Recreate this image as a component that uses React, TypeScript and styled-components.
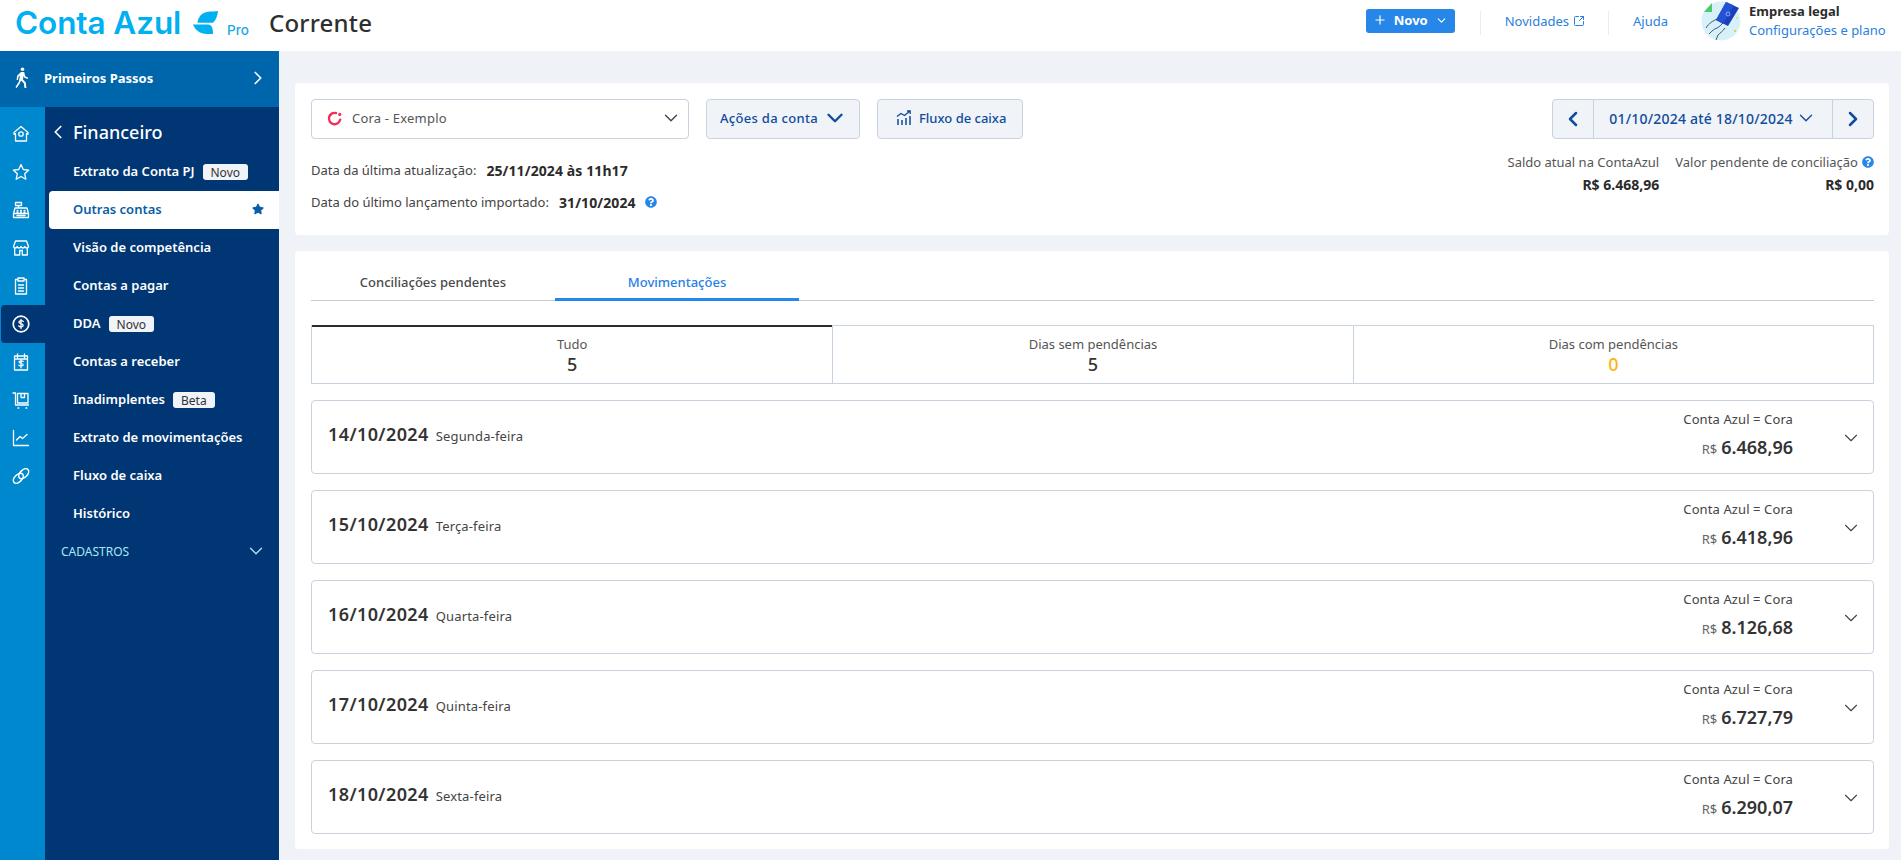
import React from "react";
import styled, { createGlobalStyle } from "styled-components";
import { ChevronDown, ChevronLeft, ChevronRight, Plus, SquareArrowOutUpRight } from "lucide-react";
import { FaQuestionCircle, FaStar } from "react-icons/fa";

const Global = createGlobalStyle`
  html, body { margin: 0; padding: 0; height: 100%; overflow: hidden; background: #eff2f7; }
  body { font-family: "Noto Sans", "Open Sans", sans-serif; color: #333; font-size: 13px; }
  * { box-sizing: border-box; }
`;

const Page = styled.div`
  width: 1901px; height: 860px; display: flex; flex-direction: column; overflow: hidden;
`;
const TopBar = styled.header`
  height: 51px; flex: none; background: #fff; display: flex; align-items: center; padding-left: 15px;
`;
const Logo = styled.div`
  display: flex; align-items: center; width: 254px; flex: none; margin-top: -6px;
`;
const LogoWord = styled.span`
  font-family: "Inter", sans-serif; font-weight: 600; font-size: 31.500px; letter-spacing: -0.1px; color: #00b0f0; line-height: 40px; white-space: nowrap; width: 178px;
`;
const LogoPro = styled.span`
  font-family: "Inter", sans-serif; font-size: 13.500px; font-weight: 500; color: #1ba8e6; margin: 14px 0 0 9px;
`;
const PageTitle = styled.h1`
  margin: -5px 0 0; font-size: 24px; letter-spacing: 0.2px; font-weight: 500; color: #2f2f2f; line-height: 32px;
`;
const TopRight = styled.div`
  margin-left: auto; display: flex; align-items: center; height: 100%;
`;
const NewButton = styled.button`
  width: 89px; height: 24px; border: 0; border-radius: 3px; background: #2687e9; color: #fff; display: flex; align-items: center; justify-content: center; gap: 7px; font: 700 13px "Noto Sans", sans-serif; padding: 0 0 2px; margin-top: -9px;
`;
const TopSep = styled.span<{ $left: number }>`
  width: 1px; height: 24px; background: #e9edf3; margin-left: ${p => p.$left}px; margin-top: -5px;
`;
const TopLink = styled.a<{ $left: number }>`
  color: #2a80de; font-size: 13px; margin-left: ${p => p.$left}px; display: flex; align-items: center; gap: 4px; margin-top: -9px; white-space: nowrap;
`;
const Company = styled.div`
  display: flex; align-items: center; margin-left: 33px; width: 200px; margin-top: -9px;
`;
const CompanyText = styled.div`
  margin-left: 8px; display: flex; flex-direction: column; line-height: 19px;
`;
const CompanyName = styled.strong`
  font-size: 13px; font-weight: 700; color: #2b2b2b;
`;
const CompanyLink = styled.a`
  font-size: 13px; color: #2a80de; white-space: nowrap;
`;
const Body = styled.div`
  flex: 1; display: flex; min-height: 0;
`;
const Sidebar = styled.aside`
  width: 279px; flex: none; display: flex; flex-direction: column;
`;
const FirstSteps = styled.div`
  height: 56px; flex: none; background: #0066ab; color: #fff; display: flex; align-items: center; padding: 0 10px 2px 15px; font-size: 13px; font-weight: 700;
`;
const FirstStepsLabel = styled.span`
  margin-left: 15px; flex: 1;
`;
const SideBody = styled.div`
  flex: 1; display: flex; min-height: 0;
`;
const Rail = styled.nav`
  width: 45px; flex: none; background: #0088cf; padding-top: 8px; display: flex; flex-direction: column; align-items: flex-end;
`;
const RailItem = styled.div<{ $active?: boolean }>`
  width: 44px; height: 38px; flex: none; display: flex; align-items: center; justify-content: center; padding-right: 4px; color: #fff;
  border-radius: 4px 0 0 4px; background: ${p => (p.$active ? "#003673" : "transparent")};
`;
const Nav = styled.nav`
  flex: 1; background: #003673; color: #fff;
`;
const NavTitle = styled.div`
  height: 46px; display: flex; align-items: center; padding: 4px 0 0 2px; font-size: 18px; font-weight: 500;
`;
const NavTitleText = styled.span`
  margin-left: 4px;
`;
const NavItem = styled.div<{ $active?: boolean }>`
  height: 38px; margin-left: 4px; padding: 0 15px 2px 24px; display: flex; align-items: center; font-size: 13px; font-weight: 600;
  color: ${p => (p.$active ? "#0a5ea6" : "#fff")};
  background: ${p => (p.$active ? "#fff" : "transparent")};
  border-radius: 4px 0 0 4px;
  justify-content: ${p => (p.$active ? "space-between" : "flex-start")};
`;
const Tag = styled.span`
  height: 16px; padding: 0 8px; margin-left: 8px; border-radius: 3px; background: #f0f3f8; color: #333; font-size: 12px; font-weight: 400; display: flex; align-items: center; margin-top: 2px;
`;
const NavGroup = styled.div`
  height: 38px; padding: 0 12px 2px 16px; display: flex; align-items: center; justify-content: space-between; font-size: 12px; color: #a8e6f6;
`;
const Main = styled.main`
  flex: 1; min-width: 0; padding: 32px 12px 0 16px; display: flex; flex-direction: column; gap: 16px;
`;
const Card = styled.section`
  background: #fff; border-radius: 4px; padding: 16px 15px 16px 16px;
`;
const AccountCard = styled(Card)`
  height: 152px; display: flex; justify-content: space-between;
`;
const Column = styled.div`
  display: flex; flex-direction: column;
`;
const Toolbar = styled.div`
  display: flex; gap: 17px; height: 40px; margin-bottom: 15px;
`;
const AccountSelect = styled.div`
  width: 378px; height: 40px; border: 1px solid #c9d3e0; border-radius: 4px; display: flex; align-items: center; padding: 0 6px 2px 15px; color: #555; font-size: 13px; letter-spacing: 0.2px;
`;
const AccountName = styled.span`
  margin-left: 10px; flex: 1;
`;
const GhostButton = styled.button<{ $w: number; $track?: number }>`
  width: ${p => p.$w}px; height: 40px; border: 1px solid #c9d3e0; border-radius: 4px; background: #f0f3f8; color: #0f4c9c; display: flex; align-items: center; justify-content: center; gap: 4px; padding: 0 0 2px 2px; font: 500 13px "Noto Sans", sans-serif; letter-spacing: ${p => p.$track ?? 0}px;
`;
const InfoLine = styled.div`
  height: 32px; display: flex; align-items: center; color: #444; font-size: 13px; white-space: nowrap;
`;
const InfoValue = styled.strong`
  font-weight: 700; font-size: 14px; letter-spacing: 0.1px; color: #2b2b2b; margin-left: 10px;
`;
const HelpIcon = styled(FaQuestionCircle)<{ $gap?: number }>`
  color: #2687e9; width: 12px; height: 12px; margin-left: ${p => p.$gap ?? 9}px;
`;
const RightCol = styled(Column)`
  align-items: flex-end;
`;
const DateGroup = styled.div`
  width: 322px; height: 40px; border: 1px solid #c9d3e0; border-radius: 4px; background: #f0f3f8; display: flex; color: #0f4c9c;
`;
const DateArrow = styled.div`
  width: 40px; flex: none; display: flex; align-items: center; justify-content: center;
`;
const DateRange = styled.div`
  flex: 1; border-left: 1px solid #c9d3e0; border-right: 1px solid #c9d3e0; display: flex; align-items: center; justify-content: center; gap: 2px; padding-bottom: 2px; font-size: 14px; letter-spacing: 0.2px; font-weight: 500;
`;
const Balances = styled.div`
  display: flex; gap: 16px; margin-top: 14px;
`;
const Balance = styled.div`
  display: flex; flex-direction: column; align-items: flex-end;
`;
const BalanceLabel = styled.div`
  display: flex; align-items: center; line-height: 18px; color: #555; font-size: 13px; white-space: nowrap;
`;
const BalanceValue = styled.div`
  font-weight: 700; line-height: 18px; margin-top: 5px; color: #2b2b2b; font-size: 14px;
`;
const ListCard = styled(Card)`
  height: 598px;
`;
const Tabs = styled.div`
  height: 34px; display: flex; border-bottom: 1px solid #c8ccd2;
`;
const TabItem = styled.div<{ $active?: boolean }>`
  width: 244px; height: 34px; text-align: center; line-height: 30px; font-size: 13px; font-weight: 500;
  color: ${p => (p.$active ? "#2680e6" : "#4a4a4a")};
  border-bottom: ${p => (p.$active ? "3px solid #2687e9" : "0")};
`;
const Summary = styled.div`
  margin-top: 24px; height: 59px; display: grid; grid-template-columns: 1fr 1fr 1fr; border: 1px solid #c9d3e0; border-top: 0;
`;
const SummaryCell = styled.div<{ $active?: boolean }>`
  border-top: ${p => (p.$active ? "2px solid #2b2b2b" : "1px solid #c9d3e0")};
  border-left: ${p => (p.$active ? "0" : "1px solid #c9d3e0")};
  display: flex; flex-direction: column; align-items: center; padding-top: ${p => (p.$active ? 8 : 9)}px;
`;
const SummaryLabel = styled.span`
  font-size: 13px; line-height: 18px; color: #555;
`;
const SummaryValue = styled.span<{ $warn?: boolean }>`
  font-size: 18px; line-height: 22px; font-weight: 500; color: ${p => (p.$warn ? "#ffb30f" : "#333")};
`;
const Rows = styled.div`
  margin-top: 16px; display: flex; flex-direction: column; gap: 16px;
`;
const Row = styled.div`
  height: 74px; border: 1px solid #c9d3e0; border-radius: 4px; display: flex; align-items: center; padding: 0 16px 3px;
`;
const RowDate = styled.div`
  display: flex; align-items: baseline; flex: 1; padding-bottom: 3px;
`;
const DateText = styled.span`
  font-size: 18px; letter-spacing: 0.4px; font-weight: 600; color: #333;
`;
const DayText = styled.span`
  font-size: 13px; letter-spacing: 0.15px; color: #444; margin-left: 7px;
`;
const RowTotal = styled.div`
  display: flex; flex-direction: column; align-items: flex-end; margin-right: 47px; padding-bottom: 2px;
`;
const TotalLabel = styled.span`
  font-size: 13px; letter-spacing: 0.1px; color: #444; line-height: 18px;
`;
const TotalAmount = styled.span`
  display: flex; align-items: baseline; gap: 4px; margin-top: 8px; line-height: 22px;
`;
const Currency = styled.span`
  font-size: 13px; color: #666;
`;
const AmountValue = styled.span`
  font-size: 18px; font-weight: 600; color: #333;
`;
const RowChevron = styled(ChevronDown)`
  color: #444; flex: none; margin: 5px -5px 0 0;
`;

const Ic = ({ children }: { children: React.ReactNode }) => (
  <svg width="20" height="20" viewBox="0 0 20 20" fill="none" stroke="currentColor" strokeWidth="1.300" strokeLinejoin="round" strokeLinecap="round">{children}</svg>
);

const railIcons: React.ReactNode[] = [
  <Ic key="h"><path d="M10 2.500 3 8.500v1.700l1.500-.6V17h11V9.600l1.500.6V8.500z" /><circle cx="10" cy="10" r="2.200" /></Ic>,
  <Ic key="s"><path d="m10 2.500 2.300 5 5.400.6-4 3.700 1.100 5.400L10 14.500l-4.800 2.700 1.100-5.400-4-3.700 5.400-.6z" /></Ic>,
  <Ic key="c"><path d="M4.500 2.500h6v3h-6zM7.500 5.500V8M4 8h12l1.500 5.500h-15zM2.500 13.500V17.500h15v-4M6 10.300h1M9.500 10.300h1M13 10.300h1M6 12h1M9.500 12h1M13 12h1M6 15.500h8" /></Ic>,
  <Ic key="st"><path d="M4.500 3h11l2 5.500c-.5 2-3 2-3.700 0-.6 2-3 2-3.800 0-.8 2-3.200 2-3.800 0-.7 2-3.200 2-3.700 0zM3.700 10.500V17h5v-4.500h2.600V17h5v-6.500" /></Ic>,
  <Ic key="cl"><path d="M7 3.500H4.500V18h11V3.500H13M7 2h6v3H7zM7.500 9h5M7.500 12h5M7.500 15h5" /></Ic>,
  <Ic key="d"><circle cx="10" cy="10" r="7.800" strokeWidth="1.700" /><path d="M12.300 7.500c-.6-1-3.800-1.400-4.400.4-.5 2 4.500 1.300 4.300 3.600-.2 1.800-3.700 1.600-4.500.4M10 5.500v9" strokeWidth="1.300" /></Ic>,
  <Ic key="cal"><path d="M3.500 4h13v14h-13zM6.500 2v3.500M13.500 2v3.500M3.500 7h13" /><path d="M12.300 9.500c-.5-.8-4-1-4.300.4-.3 1.600 4.300 1 4.200 2.900-.2 1.400-3.600 1.300-4.400.3M10 8v8" strokeWidth="1.200" /></Ic>,
  <Ic key="ct"><path d="M2 3h2.500v12h13M6.500 3.500h10.500V13H6.500zM10 3.500v4h3.500v-4M7 18h.8M15 18h.8" /></Ic>,
  <Ic key="ch"><path d="M2.500 2.500V17.500h15M5.500 12l3.500-3.500 2.500 2L16 6.500" /></Ic>,
  <Ic key="l"><ellipse cx="7.300" cy="12.300" rx="6" ry="3.600" transform="rotate(-45 7.300 12.300)" strokeWidth="1.600" /><ellipse cx="12.700" cy="7.700" rx="6" ry="3.600" transform="rotate(-45 12.700 7.700)" strokeWidth="1.600" /></Ic>,
];

const navItems: { label: string; tag?: string; active?: boolean }[] = [
  { label: "Extrato da Conta PJ", tag: "Novo" },
  { label: "Outras contas", active: true },
  { label: "Visão de competência" },
  { label: "Contas a pagar" },
  { label: "DDA", tag: "Novo" },
  { label: "Contas a receber" },
  { label: "Inadimplentes", tag: "Beta" },
  { label: "Extrato de movimentações" },
  { label: "Fluxo de caixa" },
  { label: "Histórico" },
];

const rows = [
  ["14/10/2024", "Segunda-feira", "6.468,96"],
  ["15/10/2024", "Terça-feira", "6.418,96"],
  ["16/10/2024", "Quarta-feira", "8.126,68"],
  ["17/10/2024", "Quinta-feira", "6.727,79"],
  ["18/10/2024", "Sexta-feira", "6.290,07"],
];

const LogoMark = () => (
  <svg width="25" height="23" viewBox="0 0 25 23">
    <path d="M4.500 11.800C5 6 9 1.500 15 .8 18 .5 22 .5 25 0 24.500 5 23 9 20 11.800Z" fill="#00b0f0" />
    <path d="M0 13.500H15.500C18.500 13.500 20 17 20 23H14C7 23 2 19 0 13.500Z" fill="#00b0f0" />
  </svg>
);

const Walker = () => (
  <svg width="14" height="22" viewBox="0 0 14 22" fill="#fff">
    <circle cx="7.500" cy="2.200" r="1.800" />
    <path d="M6 5h3.200l1 4.300 3 1.500-.6 1.300-3.500-1.700-.6-1.600-.5 3.700 2.800 3 .6 5.500H9.500l-.7-4.800-2.800-2.700-1.300 3.100L1.700 21 .5 20l3.300-5.200L5 8.500 3.500 9.700 3 13H1.600l.5-4.300z" />
  </svg>
);

const Avatar = () => (
  <svg width="40" height="40" viewBox="0 0 40 40">
    <circle cx="20" cy="20" r="19.500" fill="#d7f1f9" />
    <path d="M3 11 11 2v9z" fill="#4cc96b" />
    <path d="M25 1 38 7 27 25 15 19z" fill="#1d3fb8" />
    <path d="M25 1 33 4.500 22 23 15 19z" fill="#2452d6" />
    <circle cx="27" cy="13" r="2" fill="none" stroke="#9fc0ff" strokeWidth="0.800" />
    <path d="M5 27c3-5 7-7 11-9M8 33c3-3 5-5 8-6 2-.8 5-4 6-5M15 39l2-5c2-2 5-4 7-7" fill="none" stroke="#1c2d4f" strokeWidth="0.800" />
    <circle cx="36" cy="17" r="0.800" fill="#f5b82e" />
    <circle cx="34" cy="30" r="1" fill="#f5b82e" />
  </svg>
);

const CoraMark = () => (
  <svg width="15" height="15" viewBox="0 0 14 14" fill="none">
    <path d="M8.500 1.900A5.300 5.300 0 1 0 12.300 8" stroke="#ef2f58" strokeWidth="2.200" strokeLinecap="round" />
    <circle cx="11.900" cy="3.200" r="1.500" fill="#ef2f58" />
  </svg>
);

const FlowIcon = () => (
  <svg width="16" height="16" viewBox="0 0 16 16" fill="none" stroke="currentColor" strokeWidth="1.500">
    <path d="M2 9v6M6 10v5M10 8v7M14 6v9" />
    <path d="M1 6.500 5 3.500 8.500 5.500 14 1M11 1h3.200v3" strokeWidth="1.300" />
  </svg>
);

export default function App() {
  return (
    <Page>
      <Global />
      <TopBar>
        <Logo>
          <LogoWord>Conta Azul</LogoWord>
          <LogoMark />
          <LogoPro>Pro</LogoPro>
        </Logo>
        <PageTitle>Corrente</PageTitle>
        <TopRight>
          <NewButton><Plus size={14} strokeWidth={2} />Novo<ChevronDown size={13} /></NewButton>
          <TopSep $left={25} />
          <TopLink $left={24}>Novidades<SquareArrowOutUpRight size={12} /></TopLink>
          <TopSep $left={23} />
          <TopLink $left={24}>Ajuda</TopLink>
          <Company>
            <Avatar />
            <CompanyText>
              <CompanyName>Empresa legal</CompanyName>
              <CompanyLink>Configurações e plano</CompanyLink>
            </CompanyText>
          </Company>
        </TopRight>
      </TopBar>
      <Body>
        <Sidebar>
          <FirstSteps>
            <Walker />
            <FirstStepsLabel>Primeiros Passos</FirstStepsLabel>
            <ChevronRight size={22} strokeWidth={1.800} />
          </FirstSteps>
          <SideBody>
            <Rail>
              {railIcons.map((ic, i) => (
                <RailItem key={i} $active={i === 5}>{ic}</RailItem>
              ))}
            </Rail>
            <Nav>
              <NavTitle>
                <ChevronLeft size={22} strokeWidth={1.800} />
                <NavTitleText>Financeiro</NavTitleText>
              </NavTitle>
              {navItems.map(it => (
                <NavItem key={it.label} $active={it.active}>
                  {it.label}
                  {it.tag && <Tag>{it.tag}</Tag>}
                  {it.active && <FaStar size={12} color="#0a5ea6" />}
                </NavItem>
              ))}
              <NavGroup>CADASTROS<ChevronDown size={22} strokeWidth={1.500} color="#a8e6f6" /></NavGroup>
            </Nav>
          </SideBody>
        </Sidebar>
        <Main>
          <AccountCard>
            <Column>
              <Toolbar>
                <AccountSelect>
                  <CoraMark />
                  <AccountName>Cora - Exemplo</AccountName>
                  <ChevronDown size={22} strokeWidth={1.500} color="#444" />
                </AccountSelect>
                <GhostButton $w={154} $track={0.3}>Ações da conta<ChevronDown size={26} strokeWidth={2.200} /></GhostButton>
                <GhostButton $w={146}><FlowIcon />&nbsp;Fluxo de caixa</GhostButton>
              </Toolbar>
              <InfoLine>Data da última atualização:<InfoValue>25/11/2024 às 11h17</InfoValue></InfoLine>
              <InfoLine>Data do último lançamento importado:<InfoValue>31/10/2024</InfoValue><HelpIcon /></InfoLine>
            </Column>
            <RightCol>
              <DateGroup>
                <DateArrow><ChevronLeft size={24} strokeWidth={2.500} /></DateArrow>
                <DateRange>01/10/2024 até 18/10/2024<ChevronDown size={22} strokeWidth={1.500} /></DateRange>
                <DateArrow><ChevronRight size={24} strokeWidth={2.500} /></DateArrow>
              </DateGroup>
              <Balances>
                <Balance>
                  <BalanceLabel>Saldo atual na ContaAzul</BalanceLabel>
                  <BalanceValue>R$ 6.468,96</BalanceValue>
                </Balance>
                <Balance>
                  <BalanceLabel>Valor pendente de conciliação<HelpIcon $gap={4} /></BalanceLabel>
                  <BalanceValue>R$ 0,00</BalanceValue>
                </Balance>
              </Balances>
            </RightCol>
          </AccountCard>
          <ListCard>
            <Tabs>
              <TabItem>Conciliações pendentes</TabItem>
              <TabItem $active>Movimentações</TabItem>
            </Tabs>
            <Summary>
              <SummaryCell $active><SummaryLabel>Tudo</SummaryLabel><SummaryValue>5</SummaryValue></SummaryCell>
              <SummaryCell><SummaryLabel>Dias sem pendências</SummaryLabel><SummaryValue>5</SummaryValue></SummaryCell>
              <SummaryCell><SummaryLabel>Dias com pendências</SummaryLabel><SummaryValue $warn>0</SummaryValue></SummaryCell>
            </Summary>
            <Rows>
              {rows.map(r => (
                <Row key={r[0]}>
                  <RowDate><DateText>{r[0]}</DateText><DayText>{r[1]}</DayText></RowDate>
                  <RowTotal>
                    <TotalLabel>Conta Azul = Cora</TotalLabel>
                    <TotalAmount><Currency>R$</Currency><AmountValue>{r[2]}</AmountValue></TotalAmount>
                  </RowTotal>
                  <RowChevron size={22} strokeWidth={1.200} />
                </Row>
              ))}
            </Rows>
          </ListCard>
        </Main>
      </Body>
    </Page>
  );
}
